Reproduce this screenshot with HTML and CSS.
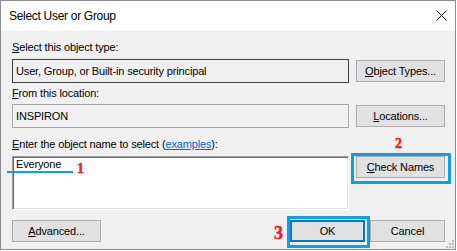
FILE: index.html
```html
<!DOCTYPE html>
<html>
<head>
<meta charset="utf-8">
<link rel="stylesheet" href="styles.css">
</head>
<body>
<div class="window">
  <div class="titlebar">
    <span class="title">Select User or Group</span>
    <svg class="close" width="11" height="11" viewBox="0 0 11 11"><path d="M0.5 0.5 L10.5 10.5 M10.5 0.5 L0.5 10.5" stroke="#111" stroke-width="1" fill="none"/></svg>
  </div>
  <div class="content">
    <div class="label l1"><u>S</u>elect this object type:</div>
    <div class="row">
      <div class="field dark">User, Group, or Built-in security principal</div>
      <div class="btn"><u>O</u>bject Types...</div>
    </div>
    <div class="label l2"><u>F</u>rom this location:</div>
    <div class="row">
      <div class="field light">INSPIRON</div>
      <div class="btn"><u>L</u>ocations...</div>
    </div>
    <div class="label l3"><u>E</u>nter the object name to select (<span class="link">examples</span>):</div>
    <div class="row top">
      <div class="field edit">Everyone</div>
      <div class="btn"><u>C</u>heck Names</div>
    </div>
    <div class="bottom">
      <div class="btn"><u>A</u>dvanced...</div>
      <div class="spacer"></div>
      <div class="btn small default">OK</div>
      <div class="btn small">Cancel</div>
    </div>
  </div>
  <svg class="grip" width="8" height="8" viewBox="0 0 8 8">
    <rect x="6" y="0" width="2" height="2" fill="#bcbcbc"/>
    <rect x="3" y="3" width="2" height="2" fill="#bcbcbc"/>
    <rect x="6" y="3" width="2" height="2" fill="#bcbcbc"/>
    <rect x="0" y="6" width="2" height="2" fill="#bcbcbc"/>
    <rect x="3" y="6" width="2" height="2" fill="#bcbcbc"/>
    <rect x="6" y="6" width="2" height="2" fill="#bcbcbc"/>
  </svg>
  <div class="mark line1"></div>
  <div class="num n1">1</div>
  <div class="num n2">2</div>
  <div class="num n3">3</div>
  <div class="hl hl-check"></div>
  <div class="hl hl-ok"></div>
</div>
</body>
</html>
```
FILE: styles.css
```css
html, body {
  margin: 0;
  padding: 0;
  background: #ffffff;
}
body {
  font-family: "Liberation Sans", Arial, sans-serif;
  color: #000;
}
.window {
  position: relative;
  width: 456px;
  height: 250px;
  box-sizing: border-box;
  border: 1px solid #8c8c8c;
  background: #f0f0f0;
  display: flex;
  flex-direction: column;
}
.titlebar {
  height: 30px;
  background: #ffffff;
  display: flex;
  align-items: center;
  justify-content: space-between;
  padding-left: 8px;
}
.title {
  font-size: 12px;
  line-height: 14px;
  letter-spacing: -0.3px;
}
.close {
  align-self: flex-start;
  margin-top: 9px;
  margin-right: 8px;
}
.content {
  padding: 10px 10px 0 11px;
  display: flex;
  flex-direction: column;
  font-size: 11px;
  letter-spacing: -0.15px;
}
.label {
  line-height: 13px;
  height: 13px;
  white-space: nowrap;
}
.l1 { margin-bottom: 5px; }
.l2 { margin-top: 4px; margin-bottom: 4px; }
.l3 { margin-top: 10px; margin-bottom: 5px; }
.link {
  color: #0066cc;
  text-decoration: underline;
}
.row {
  display: flex;
  align-items: center;
  gap: 7px;
}
.row.top {
  align-items: flex-start;
}
.field {
  width: 337px;
  height: 24px;
  box-sizing: border-box;
  padding-left: 3px;
  display: flex;
  align-items: center;
  line-height: 13px;
  white-space: nowrap;
}
.field.dark {
  border: 1px solid #3f3f3f;
  background: #f0f0f0;
}
.field.light {
  border: 1px solid #a8a8a8;
  background: #f0f0f0;
}
.field.edit {
  height: 54px;
  align-items: flex-start;
  padding-top: 1px;
  background: #ffffff;
  border-style: solid;
  border-width: 1px;
  border-color: #a0a0a0 #ffffff #ffffff #a0a0a0;
  box-shadow: inset 1px 1px 0 #696969, inset -1px -1px 0 #e3e3e3;
}
.btn {
  width: 89px;
  height: 22px;
  box-sizing: border-box;
  border: 1px solid #adadad;
  background: #e1e1e1;
  display: flex;
  align-items: center;
  justify-content: center;
  line-height: 13px;
  white-space: nowrap;
}
.btn.small {
  width: 75px;
}
.btn.default {
  border: 2px solid #0078d7;
}
.bottom {
  margin-top: 10px;
  display: flex;
  gap: 5px;
}
.spacer {
  flex: 1;
}
.grip {
  position: absolute;
  right: 1px;
  bottom: 1px;
}
.mark {
  position: absolute;
  background: #0ea0e4;
}
.line1 {
  left: 6px;
  top: 170px;
  width: 66px;
  height: 2px;
}
.num {
  position: absolute;
  font-family: "Liberation Serif", "Times New Roman", serif;
  font-weight: bold;
  color: #ed1c24;
  font-size: 14px;
  line-height: 14px;
  -webkit-text-stroke: 0.5px #ed1c24;
}
.n1 { left: 76px; top: 161px; }
.n2 { left: 394px; top: 136px; }
.n3 { left: 273px; top: 223px; font-size: 18px; line-height: 18px; }
.hl {
  position: absolute;
  box-sizing: border-box;
  border: 3px solid #0ea0e4;
}
.hl-check {
  left: 350px;
  top: 152px;
  width: 100px;
  height: 31px;
}
.hl-ok {
  left: 286px;
  top: 215px;
  width: 83px;
  height: 32px;
}
```
